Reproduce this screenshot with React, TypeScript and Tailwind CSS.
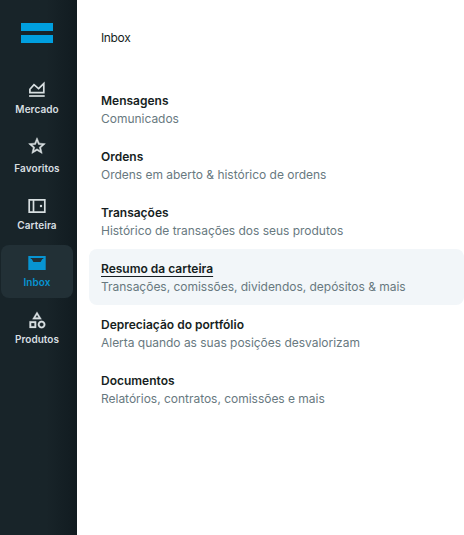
import type { ReactNode } from "react";

const nav: { label: string; icon: ReactNode; active?: boolean; shift?: string; gap?: string }[] = [
  {
    label: "Mercado",
    shift: "-mt-0.5 mb-0.5",
    icon: (
      <g fill="none" stroke="currentColor" strokeWidth="1.7">
        <path d="M2.9 12.7V9.3L7 4.6L11.6 8.6L16.8 3.6V12.7Z" />
        <path d="M2.1 16H17.7" />
      </g>
    ),
  },
  {
    label: "Favoritos",
    shift: "-mt-[3px] mb-[3px]",
    gap: "mt-1",
    icon: (
      <path
        transform="scale(0.8333)"
        fill="currentColor"
        stroke="currentColor"
        strokeWidth="0.6"
        d="M22 9.24l-7.19-.62L12 2 9.19 8.63 2 9.24l5.46 4.73L5.82 21 12 17.27 18.18 21l-1.63-7.03L22 9.24zM12 15.4l-3.76 2.27 1-4.28-3.32-2.88 4.38-.38L12 6.1l1.71 4.04 4.38.38-3.32 2.88 1 4.28L12 15.4z"
      />
    ),
  },
  {
    label: "Carteira",
    icon: (
      <g fill="none" stroke="currentColor" strokeWidth="1.7">
        <path d="M2.2 3.8H17.8V16.2H2.2Z M6.5 3.8V16.2" />
        <circle cx="14" cy="10" r="1.2" fill="currentColor" stroke="none" />
      </g>
    ),
  },
  {
    label: "Inbox",
    active: true,
    icon: (
      <path
        fill="currentColor"
        fillRule="evenodd"
        d="M1.3 3H18.7V17H1.3Z M3.7 5.1V6.1H4.7L6.4 8.9H13.6L15.3 6.1H16.3V5.1Z"
      />
    ),
  },
  {
    label: "Produtos",
    icon: (
      <path
        transform="scale(0.8333)"
        fill="currentColor"
        stroke="currentColor"
        strokeWidth="0.3"
        d="M12 2l-5.5 9h11L12 2zm0 3.84L13.93 9h-3.87L12 5.84zM17.5 13c-2.49 0-4.5 2.01-4.5 4.5s2.01 4.5 4.5 4.5 4.5-2.01 4.5-4.5-2.01-4.5-4.5-4.5zm0 7a2.5 2.5 0 0 1 0-5 2.5 2.5 0 0 1 0 5zM3 21.5h8v-8H3v8zm2-6h4v4H5v-4z"
      />
    ),
  },
];

const entries = [
  { title: "Mensagens", text: "Comunicados" },
  { title: "Ordens", text: "Ordens em aberto & histórico de ordens" },
  { title: "Transações", text: "Histórico de transações dos seus produtos" },
  {
    title: "Resumo da carteira",
    text: "Transações, comissões, dividendos, depósitos & mais",
    active: true,
  },
  { title: "Depreciação do portfólio", text: "Alerta quando as suas posições desvalorizam" },
  { title: "Documentos", text: "Relatórios, contratos, comissões e mais" },
];

export default function App() {
  return (
    <div className="flex h-screen w-full overflow-hidden bg-white font-['Inter',sans-serif]">
      <aside className="flex w-[77px] shrink-0 flex-col bg-linear-to-r from-[#182429] from-60% to-[#111b20] pl-px">
        <div className="ml-5 mt-[23px] flex w-8 flex-col gap-1">
          <div className="h-2 bg-[#009fdf]" />
          <div className="h-2 bg-[#009fdf]" />
        </div>
        <nav className="mt-[31px] flex w-[72px] flex-col gap-1">
          {nav.map((item) => (
            <a
              key={item.label}
              className={`flex h-[53px] flex-col items-center rounded-lg pt-2 ${item.shift ?? ""} ${
                item.active ? "bg-[#223036] text-[#0794d2]" : "text-[#d8dfe1]"
              }`}
            >
              <svg viewBox="0 0 20 20" className="size-5">
                {item.icon}
              </svg>
              <span
                className={`text-[10px] font-semibold leading-4 tracking-[0.06px] ${
                  item.gap ?? "mt-px"
                }`}
              >
                {item.label}
              </span>
            </a>
          ))}
        </nav>
      </aside>
      <main className="min-w-0 flex-1 pl-3">
        <h1 className="ml-3 mt-[29px] text-xs leading-[18px] tracking-[-0.35px] text-[#161e22]">
          Inbox
        </h1>
        <ul className="mt-[34px]">
          {entries.map((e) => (
            <li
              key={e.title}
              className={`h-14 whitespace-nowrap rounded-lg px-3 pt-[11px] text-xs leading-[18px] ${
                e.active ? "bg-[#f2f6f9]" : ""
              }`}
            >
              <div
                className={`font-semibold text-[#161e22] ${
                  e.active ? "underline decoration-1 underline-offset-[2.5px]" : ""
                }`}
              >
                {e.title}
              </div>
              <div className="tracking-[-0.02px] text-[#68797f]">{e.text}</div>
            </li>
          ))}
        </ul>
      </main>
    </div>
  );
}
